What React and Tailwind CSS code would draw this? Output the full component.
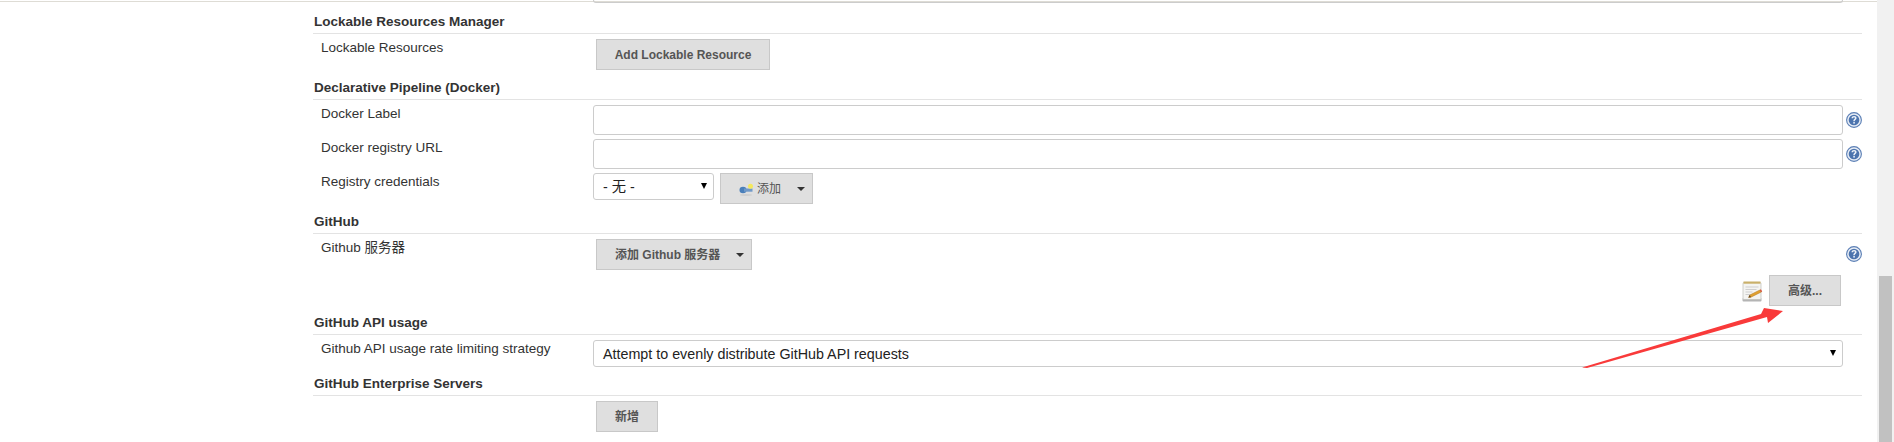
import React from 'react';

const FONT = "font-['Liberation_Sans','Noto_Sans_CJK_SC',sans-serif]";

const HelpIcon = () => (
  <svg width="16" height="16" viewBox="0 0 16 16" className="shrink-0">
    <circle cx="8" cy="8" r="7.4" fill="#e6ecf5" stroke="#5b7fb5" strokeWidth="1.1" />
    <circle cx="8" cy="8" r="5.3" fill="#4c74ae" />
    <path d="M5.5 6.2C5.5 4.8 6.7 3.9 8.100 3.900c1.400 0 2.500.8 2.500 2.100 0 1.700-1.900 1.800-1.900 3.300H7.300c0-2.100 1.600-2.200 1.600-3.200 0-.5-.3-.8-.9-.8-.5 0-.9.4-.9.9z" fill="#eef3fa" />
    <rect x="7.300" y="10" width="1.500" height="1.600" fill="#eef3fa" />
  </svg>
);

const KeyIcon = () => (
  <svg width="16" height="16" viewBox="0 0 16 16" className="shrink-0">
    <ellipse cx="8" cy="14" rx="6" ry="1" fill="#cfcfcf" />
    <ellipse cx="5" cy="9" rx="3.500" ry="3.200" fill="#4a7fba" />
    <rect x="6" y="7.500" width="8.500" height="3.200" fill="#7099c8" />
    <circle cx="12.500" cy="5.200" r="2.500" fill="#f4e85e" />
  </svg>
);

const NotepadIcon = () => (
  <svg width="21" height="21" viewBox="0 0 21 21" className="mt-[2px] shrink-0">
    <rect x="0.500" y="17" width="19" height="3.500" rx="1" fill="#b4b4b4" />
    <rect x="1" y="1.500" width="18" height="17" rx="1" fill="#f4f4f2" stroke="#bdbdb8" strokeWidth="0.7" />
    <rect x="1.500" y="0.500" width="17" height="2.200" fill="#c9b06a" />
    <path d="M3.500 6h13M3.500 8.500h11M3.500 11h7M3.500 13.500h5" stroke="#cfcfcf" strokeWidth="1" />
    <path d="M6.500 16.500l1.200-2.500 10-5 1.300 2.200-10 5z" fill="#e0a030" stroke="#a9721e" strokeWidth="0.4" />
    <path d="M6.500 16.500l1.200-2.500 1.300 2.200z" fill="#5c4526" />
    <path d="M17.700 9l1.300 2.200 1.200-.7-1.300-2.200z" fill="#d8553a" />
  </svg>
);

const Caret = () => (
  <span className="block w-0 h-0 border-x-[4px] border-x-transparent border-t-[4px] border-t-[#333]" />
);

const Button = ({ children, className = '' }) => (
  <button className={`h-[31px] bg-[#dfdfdf] border border-[#c8c8c8] text-[12px] font-bold text-[#555] flex items-center shrink-0 ${className}`}>
    {children}
  </button>
);

const SectionHeader = ({ title, className = '' }) => (
  <div className={`h-[23px] border-b border-[#e3e3e3] pl-px pt-[3px] text-[13.5px] leading-[15px] font-bold text-[#333] ${className}`}>
    {title}
  </div>
);

const Row = ({ label, children, help, className = '' }) => (
  <div className={`flex items-start ${className}`}>
    <div className="w-[280px] pl-2 pt-px text-[13.5px] leading-[15px] text-[#333] shrink-0">{label}</div>
    <div className="flex-1 min-w-0 flex items-start gap-[6px]">{children}</div>
    <div className="w-[19px] pl-[3px] pt-[7px] shrink-0">{help && <HelpIcon />}</div>
  </div>
);

const TextBox = () => (
  <input className="w-full h-[30px] bg-white border border-[#ccc] rounded-[3px]" />
);

const SelectBox = ({ children, className = '' }) => (
  <div className={`h-[27px] bg-white border border-[#ccc] rounded-[3px] pl-[9px] pr-[6px] text-[14.3px] text-[#222] flex justify-between ${className}`}>
    <span className="leading-[26px]">{children}</span>
    <span className="w-0 h-0 mt-[9px] border-x-[3.5px] border-x-transparent border-t-[6px] border-t-black" />
  </div>
);

export default function App() {
  return (
    <div className={`relative flex h-[442px] overflow-hidden bg-white ${FONT}`}>
      <div className="flex-1 min-w-0">
        {/* top edge of the previous section */}
        <div className="h-[2px] border-b border-[#dedcd5] flex pl-[593px] pr-[34px]">
          <div className="flex-1 h-[3px] border-x border-b border-[#ccc] rounded-b-[3px]" />
        </div>
        <div className="pl-[313px] pr-[15px] pt-[9px]">
          <SectionHeader title="Lockable Resources Manager" />
          <Row label="Lockable Resources" className="pt-[5px]">
            <Button className="ml-[3px] w-[174px] justify-center">Add Lockable Resource</Button>
          </Row>

          <SectionHeader title="Declarative Pipeline (Docker)" className="mt-[7px]" />
          <Row label="Docker Label" help className="pt-[5px]">
            <TextBox />
          </Row>
          <Row label="Docker registry URL" help className="pt-[4px]">
            <TextBox />
          </Row>
          <Row label="Registry credentials" className="pt-[4px]">
            <SelectBox className="w-[121px]">- 无 -</SelectBox>
            <Button className="w-[93px] pl-[17px] font-normal">
              <KeyIcon />
              <span className="ml-[3px] font-normal">添加</span>
              <span className="ml-[16px]"><Caret /></span>
            </Button>
          </Row>

          <SectionHeader title="GitHub" className="mt-[7px]" />
          <Row label="Github 服务器" help className="pt-[5px]">
            <Button className="ml-[3px] w-[156px] pl-[18px]">
              <span>添加 Github 服务器</span>
              <span className="ml-[16px]"><Caret /></span>
            </Button>
          </Row>
          <div className="flex justify-end items-center gap-[6px] pr-[21px] mt-[5px]">
            <NotepadIcon />
            <Button className="w-[72px] justify-center">高级...</Button>
          </div>

          <SectionHeader title="GitHub API usage" className="mt-[6px]" />
          <Row label="Github API usage rate limiting strategy" className="pt-[5px]">
            <SelectBox className="w-full">Attempt to evenly distribute GitHub API requests</SelectBox>
          </Row>

          <SectionHeader title="GitHub Enterprise Servers" className="mt-[6px]" />
          <Row label="" className="pt-[5px]">
            <Button className="ml-[3px] w-[62px] justify-center">新增</Button>
          </Row>
        </div>
      </div>

      {/* scrollbar */}
      <div className="w-[17px] bg-[#f1f1f1] shrink-0 pt-[276px] px-[2px]">
        <div className="h-[166px] bg-[#c1c1c1]" />
      </div>

      {/* red annotation arrow */}
      <svg className="absolute left-[1575px] top-[300px]" width="215" height="75" viewBox="1575 300 215 75">
        <polygon points="1582,367.500 1761,314 1764,308 1783,311 1768,323 1767,317 1587,368" fill="#f93a3a" />
      </svg>
    </div>
  );
}
